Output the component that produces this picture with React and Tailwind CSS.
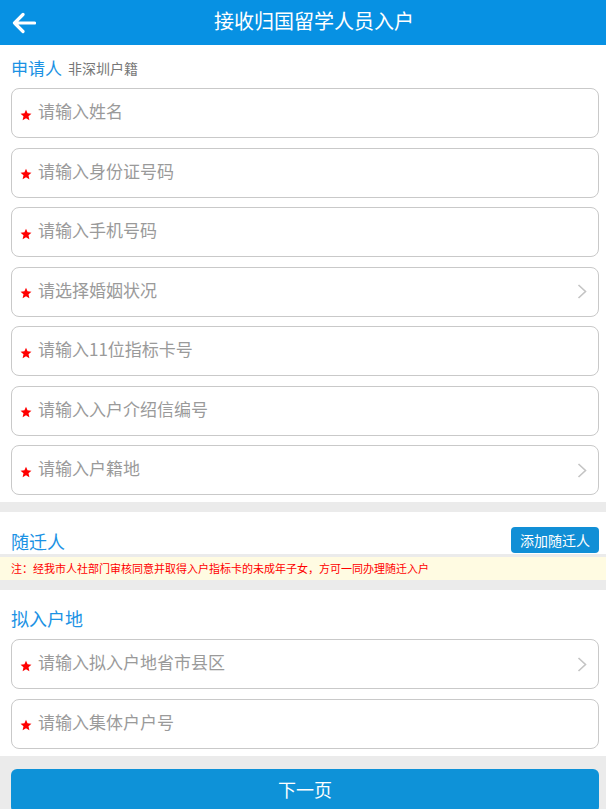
import React from "react";

const font = { fontFamily: '"Noto Sans CJK SC", "Noto Sans", sans-serif' };

function Star() {
  return (
    <svg width="12" height="12" viewBox="0 0 24 24" className="shrink-0 mt-[3px]">
      <path d="M12 1.5l3.1 7.2 7.8.7-5.9 5.2 1.8 7.7L12 18.3 5.2 22.3 7 14.6 1.1 9.4l7.8-.7z" fill="#ff0000" />
    </svg>
  );
}

function Chevron() {
  return (
    <svg width="10" height="15" viewBox="0 0 10 15" className="shrink-0">
      <path d="M1.5 1l7 6.5-7 6.5" fill="none" stroke="#c4c4c4" strokeWidth="1.6" />
    </svg>
  );
}

function Field({ text, arrow }) {
  return (
    <div className="h-[50px] border border-[#c9c9c9] rounded-[8px] flex items-center pl-[8px] pr-[11px] bg-white">
      <Star />
      <span className="ml-[6px] mb-[5px] text-[17px] text-[#9a9a9a] flex-1 leading-none">{text}</span>
      {arrow && <Chevron />}
    </div>
  );
}

export default function App() {
  return (
    <div className="w-full bg-[#ebebeb]" style={font}>
      <div className="h-[45px] bg-[#0791e3] grid grid-cols-[60px_1fr_60px] items-center">
        <div className="pl-[11px] flex items-center">
          <svg width="25" height="22" viewBox="0 0 25 22">
            <path d="M23.5 11H3.5M12 2.5L3.5 11l8.5 8.5" fill="none" stroke="#ffffff" strokeWidth="3.2" strokeLinecap="round" strokeLinejoin="round" />
          </svg>
        </div>
        <div className="text-center text-white text-[20px] leading-none pb-[4px] pl-[22px]">接收归国留学人员入户</div>
        <div />
      </div>

      <div className="bg-white pl-[11px] pr-[7px] pb-[7px]">
        <div className="h-[43px] pt-[2px] flex items-center">
          <span className="text-[17px] text-[#1b92e4] leading-none">申请人</span>
          <span className="ml-[6px] text-[14px] text-[#777777] leading-none">非深圳户籍</span>
        </div>
        <div className="flex flex-col gap-[9.5px]">
          <Field text="请输入姓名" />
          <Field text="请输入身份证号码" />
          <Field text="请输入手机号码" />
          <Field text="请选择婚姻状况" arrow />
          <Field text="请输入11位指标卡号" />
          <Field text="请输入入户介绍信编号" />
          <Field text="请输入户籍地" arrow />
        </div>
      </div>

      <div className="h-[10px]" />

      <div className="bg-white h-[42px] pl-[11px] pr-[7px] flex items-end justify-between pb-[1px]">
        <span className="text-[18px] text-[#1b92e4] leading-[22px] mb-[1px]">随迁人</span>
        <button className="h-[26px] px-[9px] rounded-[4px] bg-[#118fd6] text-white text-[14px] leading-none">添加随迁人</button>
      </div>
      <div className="h-[3px]" />
      <div className="h-[23px] bg-[#fffbe2] px-[11px] flex items-center">
        <span className="text-[11px] text-[#ff0000] leading-none whitespace-nowrap">注：经我市人社部门审核同意并取得入户指标卡的未成年子女，方可一同办理随迁入户</span>
      </div>
      <div className="h-[10px]" />

      <div className="bg-white pl-[11px] pr-[7px] pb-[7px]">
        <div className="h-[49px] pt-[7px] flex items-center">
          <span className="text-[18px] text-[#1b92e4] leading-none">拟入户地</span>
        </div>
        <div className="flex flex-col gap-[9.5px]">
          <Field text="请输入拟入户地省市县区" arrow />
          <Field text="请输入集体户户号" />
        </div>
      </div>

      <div className="pt-[13px] pb-[12px] pl-[11px] pr-[7px]">
        <button className="w-full h-[44px] rounded-[6px] bg-[#0e92d8] text-white text-[18px] leading-none pb-[4px]">下一页</button>
      </div>
    </div>
  );
}
